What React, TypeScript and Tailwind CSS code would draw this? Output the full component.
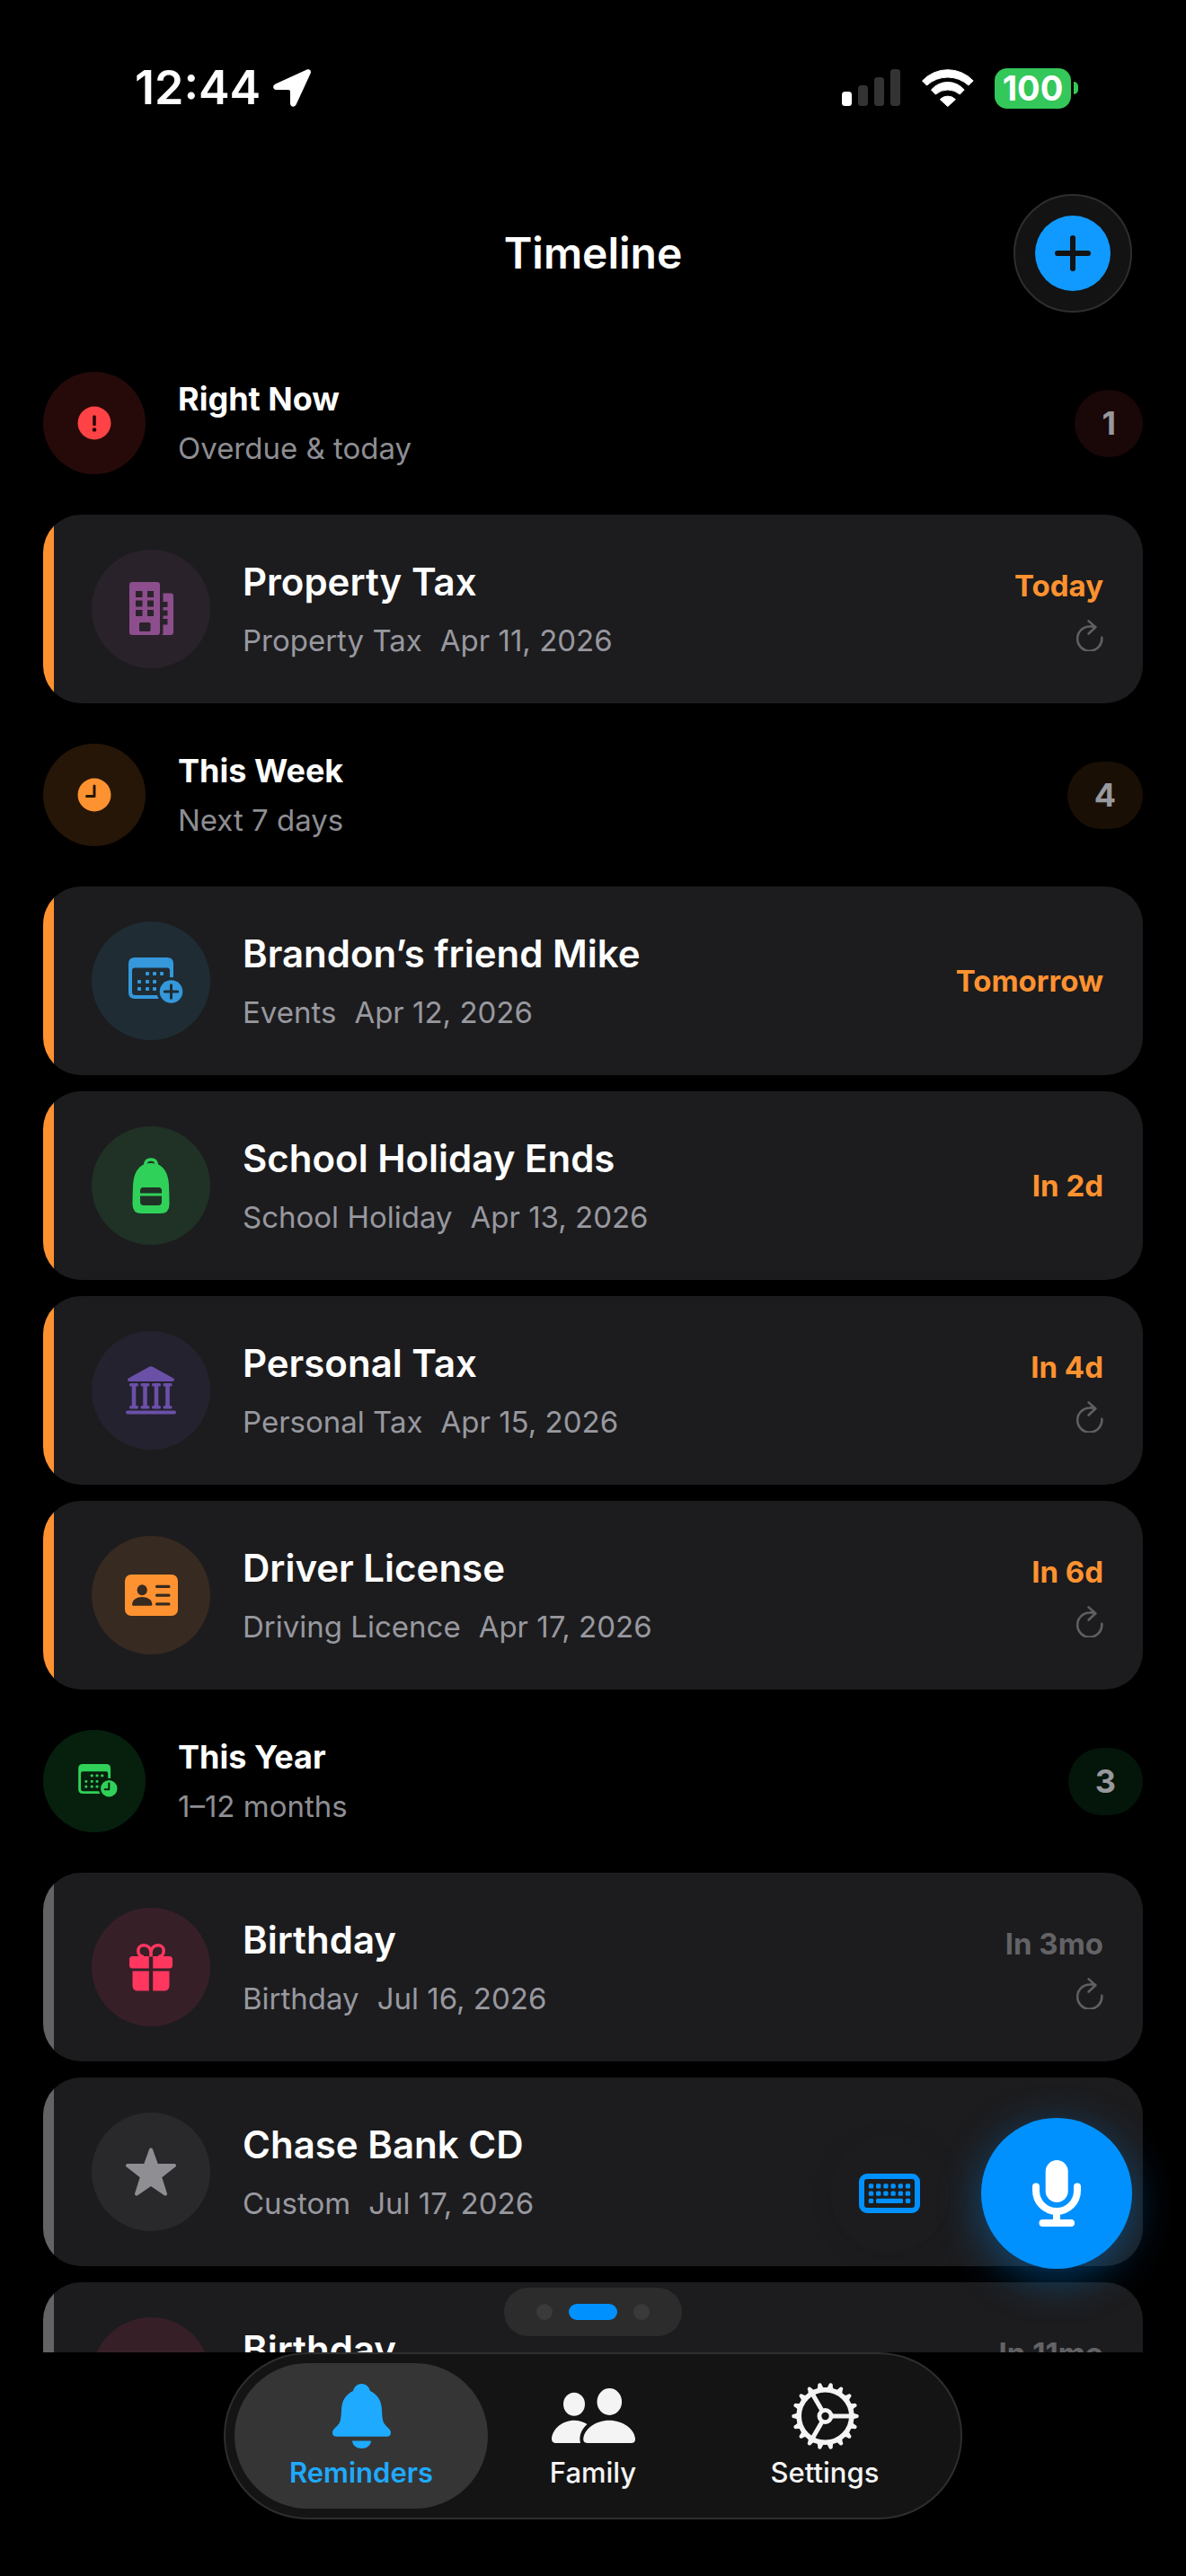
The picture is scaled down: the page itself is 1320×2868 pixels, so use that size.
import type { ReactNode } from "react";

type Reminder = {
  title: string;
  category: string;
  date: string;
  due?: string;
  repeats?: boolean;
  stripe: string;
  dueColor: string;
  iconBg: string;
  icon: ReactNode;
};

type Section = {
  title: string;
  subtitle: string;
  iconBg: string;
  badgeBg: string;
  icon: ReactNode;
  items: Reminder[];
};

function LocationIcon() {
  return (
    <svg width="42" height="42" viewBox="0 0 42 42" fill="white" aria-hidden="true">
      <path d="M37.500 .6 2.500 16.600C-1 18.500-.5 23 3.500 23H17c1.200 0 2 .8 2 2v13c0 4.200 5 5 6.700 1.200L41.700 4.500C42.800 1.700 40.400-.7 37.500 .6Z" />
    </svg>
  );
}

function SignalIcon() {
  return (
    <svg width="66" height="42" viewBox="0 0 66 42" aria-hidden="true">
      <rect x="0" y="25" width="11" height="16" rx="3.500" fill="white" />
      <rect x="18" y="18" width="11" height="23" rx="3.500" fill="#333333" />
      <rect x="36" y="9" width="11" height="32" rx="3.500" fill="#333333" />
      <rect x="54" y="0" width="11" height="41" rx="3.500" fill="#333333" />
    </svg>
  );
}

function WifiIcon() {
  return (
    <svg width="58" height="42" viewBox="0 0 58 42" fill="white" stroke="white" strokeLinejoin="round" aria-hidden="true">
      <path d="M.5 13A38.800 38.800 0 0 1 57.200 13L52 18A34.500 34.500 0 0 0 5.500 18Z" strokeWidth="1" />
      <path d="M10.500 23A24 24 0 0 1 47.200 23L42.300 28A20.700 20.700 0 0 0 15.300 28Z" strokeWidth="1" />
      <path d="M20.300 33.700A12 12 0 0 1 37.400 33.700L28.800 41.500Z" strokeWidth="1" />
    </svg>
  );
}

function RepeatIcon() {
  return (
    <svg width="30" height="35" viewBox="0 0 30 35" fill="none" stroke="#5f5f63" strokeWidth="2.600" strokeLinecap="round" strokeLinejoin="round" aria-label="Repeats">
      <path d="M28.300 19.800A13.600 13.600 0 1 1 14.700 7.500C17 7.200 19 7.400 21 8.200" />
      <path d="M13.600 1.400 21.300 8.200 13.600 15.500" />
    </svg>
  );
}

function AlertIcon() {
  return (
    <svg width="38" height="38" viewBox="0 0 38 38" aria-hidden="true">
      <circle cx="19" cy="19" r="18.500" fill="#ff4245" />
      <path d="M19 12V20.500" stroke="#260a0a" strokeWidth="3.600" strokeLinecap="round" />
      <circle cx="19" cy="26.500" r="2.300" fill="#260a0a" />
    </svg>
  );
}

function ClockIcon() {
  return (
    <svg width="38" height="38" viewBox="0 0 38 38" aria-hidden="true">
      <circle cx="19" cy="19" r="18.500" fill="#ff9230" />
      <path d="M19 9V20.500H10.500" fill="none" stroke="#261607" strokeWidth="3" strokeLinecap="round" strokeLinejoin="round" />
    </svg>
  );
}

// the calendar body is centred in the view box, the badge hangs off its corner
function CalendarIcon({ width, color, cut, badge }: { width: number; color: string; cut: string; badge: "plus" | "clock" }) {
  const dots = [
    [19, 16], [27, 16], [35, 16],
    [10, 25], [19, 25], [27, 25],
    [10, 33], [19, 33], [27, 33],
  ];
  return (
    <svg width={width} height={(width * 52) / 71} viewBox="-10 0 71 52" fill={color} aria-hidden="true">
      <path fillRule="evenodd" d="M7 0H43Q50 0 50 7V39Q50 46 43 46H7Q0 46 0 39V7Q0 0 7 0ZM7 11.500Q4 11.500 4 14.500V38.500Q4 42 7.500 42H42.500Q46 42 46 38.500V14.500Q46 11.500 43 11.500Z" />
      {dots.map(([x, y]) => (
        <rect key={`${x}-${y}`} x={x} y={y} width="4" height="4" rx="1" />
      ))}
      <circle cx="47.500" cy="38" r="16" fill={cut} />
      <circle cx="47.500" cy="38" r="12.800" />
      {badge === "plus" ? (
        <path d="M47.500 30.800V45.200M40.300 38H54.700" stroke={cut} strokeWidth="3" strokeLinecap="round" />
      ) : (
        <path d="M47.500 30V39.500H41" fill="none" stroke={cut} strokeWidth="2.800" strokeLinecap="round" strokeLinejoin="round" />
      )}
    </svg>
  );
}

function BuildingIcon() {
  return (
    <svg width="49" height="60" viewBox="0 0 49 60" fill="#8c4e8c" fillRule="evenodd" aria-hidden="true">
      <path d="M3 0H31Q34 0 34 3V56Q34 59 31 59H3Q0 59 0 56V3Q0 0 3 0ZM7 10V17H14.500V10ZM20 10V17H27V10ZM7 20.500V27.500H14.500V20.500ZM20 20.500V27.500H27V20.500ZM7 31V38H14.500V31ZM20 31V38H27V31ZM12.500 45Q11 45 11 46.500V53.500Q11 55 12.500 55H22Q23.500 55 23.500 53.500V46.500Q23.500 45 22 45Z" />
      <path d="M37.500 12.500H46Q49 12.500 49 15.500V56Q49 59 46 59H36.500Q37.500 58 37.500 56V47.500H42.500V41H37.500V37.500H42.500V31.500H37.500V28H42.500V22H37.500Z" />
    </svg>
  );
}

function BackpackIcon() {
  return (
    <svg width="42" height="63" viewBox="0 0 42 63" aria-hidden="true">
      <path d="M14.500 9C14.500 4 17 2 21 2S27.500 4 27.500 9" fill="none" stroke="#30d158" strokeWidth="3.500" />
      <path d="M21 6C28 6 40 9 41 31Q41.500 42 41.500 52Q41.500 62 31.500 62H10.500Q.5 62 .5 52Q.5 42 1 31C2 9 14 6 21 6Z" fill="#30d158" />
      <path d="M9 39.500V36.500Q9 33 12.500 33H29.500Q33 33 33 36.500V39.500ZM9 42.500H33V49Q33 53 29 53H13Q9 53 9 49Z" fill="#203126" />
    </svg>
  );
}

function BankIcon() {
  return (
    <svg width="56" height="54" viewBox="0 0 56 54" fill="#6b50a8" aria-hidden="true">
      <path d="M26 .8Q28-.5 30 .8L53 13.500Q54 14.200 54 15.300Q54 17 52 17H4Q2 17 2 15.300Q2 14.200 3 13.500Z" />
      {[9, 21.500, 34, 46.500].map((x) => (
        <g key={x}>
          <rect x={x - 5} y="19" width="10" height="3.600" rx="1.500" />
          <rect x={x - 2.300} y="20" width="4.600" height="26" />
          <rect x={x - 5} y="44" width="10" height="3.600" rx="1.500" />
        </g>
      ))}
      <rect x="0" y="49.500" width="56" height="4" rx="2" />
    </svg>
  );
}

function LicenseIcon() {
  return (
    <svg width="59" height="46" viewBox="0 0 59 46" aria-hidden="true">
      <rect width="59" height="46" rx="7" fill="#ff9230" />
      <g fill="#372a20">
        <ellipse cx="19.200" cy="17.200" rx="5.600" ry="6" />
        <path d="M9.500 34.800Q8 34.800 8 33.300C8.500 28 13 25 19.200 25S30 28 30.400 33.300Q30.400 34.800 29 34.800Z" />
        <rect x="34" y="11.800" width="16.500" height="3.200" rx="1.500" />
        <rect x="34" y="21.500" width="16.500" height="3.200" rx="1.500" />
        <rect x="34" y="31.200" width="16.500" height="3.200" rx="1.500" />
      </g>
    </svg>
  );
}

function GiftIcon() {
  return (
    <svg width="48" height="53" viewBox="0 0 48 53" fill="#ff375f" aria-hidden="true">
      <path d="M24 14.500V9.500C24 5 20.500 1.800 16.300 1.800C12.500 1.800 9.800 4.600 9.800 8C9.800 11.500 12 14.500 16 14.500M24 14.500V9.500C24 5 27.500 1.800 31.700 1.800C35.500 1.800 38.200 4.600 38.200 8C38.200 11.500 36 14.500 32 14.500" fill="none" stroke="#ff375f" strokeWidth="3.600" />
      <path d="M3.500 14H21.800V27.500H3.500Q0 27.500 0 24V17.500Q0 14 3.500 14ZM26.200 14H44.500Q48 14 48 17.500V24Q48 27.500 44.500 27.500H26.200Z" />
      <path d="M3.500 30.500H21.800V52.500H9.500Q3.500 52.500 3.500 46.500ZM26.200 30.500H44.500V46.500Q44.500 52.500 38.500 52.500H26.200Z" />
    </svg>
  );
}

function StarIcon() {
  return (
    <svg width="56" height="54" viewBox="0 0 56 54" fill="#8e8e93" stroke="#8e8e93" strokeWidth="4" strokeLinejoin="round" aria-hidden="true">
      <path d="M28 2.500 34.300 20H54L38 32.500 44 51.500 28 40.500 12 51.500 18 32.500 2 20H21.700Z" />
    </svg>
  );
}

function KeyboardIcon() {
  const columns = [10.800, 19, 27.200, 35.400, 43.600, 51.800];
  return (
    <svg width="68" height="44" viewBox="0 0 68 44" fill="#0091ff" aria-hidden="true">
      <rect x="3" y="3" width="62" height="38" rx="6" fill="none" stroke="#0091ff" strokeWidth="6" />
      {columns.map((x) => (
        <g key={x}>
          <rect x={x} y="11.200" width="5.400" height="5.200" rx="1.500" />
          <rect x={x} y="19.500" width="5.400" height="5.200" rx="1.500" />
        </g>
      ))}
      <rect x="10.800" y="27.800" width="5.400" height="5.200" rx="1.500" />
      <rect x="19" y="27.800" width="30" height="5.200" rx="1.500" />
      <rect x="51.800" y="27.800" width="5.400" height="5.200" rx="1.500" />
    </svg>
  );
}

function MicIcon() {
  return (
    <svg width="54" height="74" viewBox="0 0 54 74" fill="none" stroke="white" strokeWidth="8" strokeLinecap="round" aria-hidden="true">
      <rect x="14.700" y="0" width="25" height="47" rx="12.500" fill="white" stroke="none" />
      <path d="M4 29.500V34A23 23 0 0 0 50 34V29.500" />
      <path d="M27 58V68" strokeLinecap="butt" />
      <path d="M11.500 70H43" />
    </svg>
  );
}

function BellIcon() {
  return (
    <svg width="65" height="74" viewBox="0 -1 65 74" fill="#1eaaff" aria-hidden="true">
      <path d="M32.500 0C38 0 41 4 42 8C50 12 54.500 18 55 29C55.500 39 56 43 59 46C62 49.500 65 51 65 54.500C65 57.500 63 58.700 60.500 58.700H4.500C2 58.700 0 57.500 0 54.500C0 51 3 49.500 6 46C9 43 9.500 39 10 29C10.500 18 15 12 23 8C24 4 27 0 32.500 0Z" />
      <path d="M22 63.500H43C42.500 69 38 72 32.500 72S22.500 69 22 63.500Z" />
    </svg>
  );
}

function FamilyIcon() {
  return (
    <svg width="93" height="74" viewBox="0 -6 93 74" fill="#f4f4f4" aria-hidden="true">
      <ellipse cx="25" cy="17.700" rx="12" ry="13" />
      <ellipse cx="64.300" cy="15" rx="13.800" ry="15" />
      <path d="M5 61C1 61 0 58.500 0 56C1 45 12 35.700 25 35.700C30.500 35.700 35.500 37.500 39.500 40C33 46 30 53 32 61Z" />
      <path d="M40 61C36 61 35 58.500 35.300 56C36.500 45 49 35.700 64 35.700S92 45 93 56C93.200 59 92 61 88.500 61Z" />
    </svg>
  );
}

function GearIcon() {
  const teeth = Array.from({ length: 18 }, (_, i) => i * 20);
  return (
    <svg width="75" height="74" viewBox="-37.500 -37 75 74" fill="none" stroke="#f4f4f4" aria-hidden="true">
      <circle r="29.300" strokeWidth="5.600" />
      <circle r="6.600" strokeWidth="4.800" />
      {[0, 120, 240].map((a) => (
        <path key={a} d="M8 0H28" strokeWidth="5" transform={`rotate(${a})`} />
      ))}
      {teeth.map((a) => (
        <path key={a} d="M30-4 34.500-2.300Q37.200-2.300 37.200 0T34.500 2.300L30 4Z" fill="#f4f4f4" stroke="none" transform={`rotate(${a})`} />
      ))}
    </svg>
  );
}

const orange = { stripe: "bg-[#ff9230]", dueColor: "text-[#ff9230]" };
const gray = { stripe: "bg-[#636366]", dueColor: "text-[#636366]" };

const sections: Section[] = [
  {
    title: "Right Now",
    subtitle: "Overdue & today",
    iconBg: "bg-[#260a0a]",
    badgeBg: "bg-[#1a0707]",
    icon: <AlertIcon />,
    items: [
      { title: "Property Tax", category: "Property Tax", date: "Apr 11, 2026", due: "Today", repeats: true, ...orange, iconBg: "bg-[#2a222b]", icon: <BuildingIcon /> },
    ],
  },
  {
    title: "This Week",
    subtitle: "Next 7 days",
    iconBg: "bg-[#261607]",
    badgeBg: "bg-[#190f05]",
    icon: <ClockIcon />,
    items: [
      { title: "Brandon’s friend Mike", category: "Events", date: "Apr 12, 2026", due: "Tomorrow", ...orange, iconBg: "bg-[#1f2c34]", icon: <CalendarIcon width={71} color="#3498db" cut="#1f2c34" badge="plus" /> },
      { title: "School Holiday Ends", category: "School Holiday", date: "Apr 13, 2026", due: "In 2d", ...orange, iconBg: "bg-[#203126]", icon: <BackpackIcon /> },
      { title: "Personal Tax", category: "Personal Tax", date: "Apr 15, 2026", due: "In 4d", repeats: true, ...orange, iconBg: "bg-[#25222f]", icon: <BankIcon /> },
      { title: "Driver License", category: "Driving Licence", date: "Apr 17, 2026", due: "In 6d", repeats: true, ...orange, iconBg: "bg-[#372a20]", icon: <LicenseIcon /> },
    ],
  },
  {
    title: "This Year",
    subtitle: "1–12 months",
    iconBg: "bg-[#06200d]",
    badgeBg: "bg-[#041509]",
    icon: <CalendarIcon width={51} color="#30d158" cut="#06200d" badge="clock" />,
    items: [
      { title: "Birthday", category: "Birthday", date: "Jul 16, 2026", due: "In 3mo", repeats: true, ...gray, iconBg: "bg-[#371f28]", icon: <GiftIcon /> },
      { title: "Chase Bank CD", category: "Custom", date: "Jul 17, 2026", ...gray, iconBg: "bg-[#29292b]", icon: <StarIcon /> },
      { title: "Birthday", category: "Birthday", date: "Mar 14, 2027", due: "In 11mo", repeats: true, ...gray, iconBg: "bg-[#371f28]", icon: <GiftIcon /> },
    ],
  },
];

function ReminderCard({ item }: { item: Reminder }) {
  return (
    <li className="flex items-stretch overflow-hidden rounded-[42px] bg-[#1c1c1e]">
      <div className={`w-3 shrink-0 ${item.stripe}`} />
      <div className="flex flex-1 items-center py-[39px] pr-11 pl-[42px]">
        <div className={`flex size-[132px] shrink-0 items-center justify-center rounded-full ${item.iconBg}`}>{item.icon}</div>
        <div className="ml-9 flex flex-1 flex-col gap-5">
          <h3 className="text-[42px] leading-[50px] font-semibold">{item.title}</h3>
          <p className="flex gap-5 text-[33px] leading-10 text-[#98989f]">
            <span>{item.category}</span>
            <span>{item.date}</span>
          </p>
        </div>
        <div className="flex flex-col items-end gap-[18px]">
          {item.due && <span className={`text-[33px] leading-10 font-bold ${item.dueColor}`}>{item.due}</span>}
          {item.repeats && <RepeatIcon />}
        </div>
      </div>
    </li>
  );
}

function TimelineSection({ section }: { section: Section }) {
  return (
    <section className="flex flex-col gap-[45px]">
      <div className="flex items-center">
        <div className={`flex size-[114px] items-center justify-center rounded-full ${section.iconBg}`}>
          {section.icon}
        </div>
        <div className="ml-9 flex flex-1 flex-col gap-3.5">
          <h2 className="text-[36px] leading-[42px] font-bold">{section.title}</h2>
          <p className="text-[33px] leading-10 text-[#8e8e93]">{section.subtitle}</p>
        </div>
        <span className={`rounded-full px-[30px] py-4 text-[36px] leading-[43px] font-bold text-[#98989d] ${section.badgeBg}`}>
          {section.items.length}
        </span>
      </div>
      <ul className="flex flex-col gap-[18px]">
        {section.items.map((item) => (
          <ReminderCard key={item.title + item.date} item={item} />
        ))}
      </ul>
    </section>
  );
}

const tabs = [
  { label: "Reminders", icon: <BellIcon />, active: true },
  { label: "Family", icon: <FamilyIcon />, active: false },
  { label: "Settings", icon: <GearIcon />, active: false },
];

export default function App() {
  return (
    <div className="flex h-screen flex-col bg-black font-[Inter,sans-serif] text-white">
      {/* status bar */}
      <div className="flex items-center justify-between pt-[72px] pr-[120px] pl-[150px]">
        <div className="flex items-center gap-3.5">
          <span className="text-[52px] leading-[52px] font-semibold">12:44</span>
          <LocationIcon />
        </div>
        <div className="flex items-center gap-[23px]">
          <SignalIcon />
          <WifiIcon />
          <div className="flex items-center gap-[3px]">
            <span className="flex h-[45px] w-[85px] items-center justify-center rounded-[14px] bg-[#34c759] text-[38px] leading-[45px] font-bold">
              100
            </span>
            <span className="h-3.5 w-[5px] rounded-r-full bg-[#34c759]" />
          </div>
        </div>
      </div>

      <header className="mt-[92px] grid grid-cols-3 items-center px-[60px]">
        <h1 className="col-start-2 text-center text-[48px] leading-[60px] font-semibold">Timeline</h1>
        <button type="button" aria-label="Add reminder" className="flex size-[132px] items-center justify-center justify-self-end rounded-full border-2 border-[#2e2e2e] bg-[#131313]">
          <svg width="84" height="84" viewBox="0 0 84 84" aria-hidden="true">
            <circle cx="42" cy="42" r="42" fill="#109aff" />
            <path d="M42 25V59M25 42H59" stroke="#131313" strokeWidth="6" strokeLinecap="round" />
          </svg>
        </button>
      </header>

      <div className="relative mt-[66px] min-h-0 flex-1">
        <main className="flex h-full flex-col gap-[45px] overflow-hidden px-12">
          {sections.map((section) => (
            <TimelineSection key={section.title} section={section} />
          ))}
        </main>

        {/* floating actions */}
        <div className="absolute right-[60px] bottom-[93px] flex items-center gap-9">
          <button type="button" aria-label="Type a reminder" className="flex size-[132px] items-center justify-center rounded-full bg-[#1c1c1e] shadow-[0_6px_24px_rgba(0,0,0,0.1)]">
            <KeyboardIcon />
          </button>
          <button type="button" aria-label="Speak a reminder" className="flex size-[168px] items-center justify-center rounded-full bg-[#0091ff] shadow-[0_12px_48px_rgba(0,145,255,0.4)]">
            <MicIcon />
          </button>
        </div>

        {/* page indicator */}
        <div className="absolute bottom-[18px] left-1/2 flex -translate-x-1/2 gap-[18px] rounded-full bg-[#2c2c2c] px-9 py-[18px]">
          <span className="size-[18px] rounded-full bg-[#3a3a3c]" />
          <span className="h-[18px] w-[54px] rounded-full bg-[#0091ff]" />
          <span className="size-[18px] rounded-full bg-[#3a3a3c]" />
        </div>
      </div>

      <nav className="mb-[63px] flex -space-x-6 self-center rounded-full border-2 border-[#2e2e2e] bg-[#141414] p-2.5">
        {tabs.map((tab) => (
          <a
            key={tab.label}
            href="#"
            aria-current={tab.active ? "page" : undefined}
            className={`flex h-[162px] w-[282px] flex-col items-center justify-center gap-2 rounded-full text-[31px] leading-9 ${tab.active ? "bg-[#353535] font-semibold text-[#1eaaff]" : "font-medium text-[#f4f4f4]"}`}
          >
            {tab.icon}
            {tab.label}
          </a>
        ))}
      </nav>
    </div>
  );
}
